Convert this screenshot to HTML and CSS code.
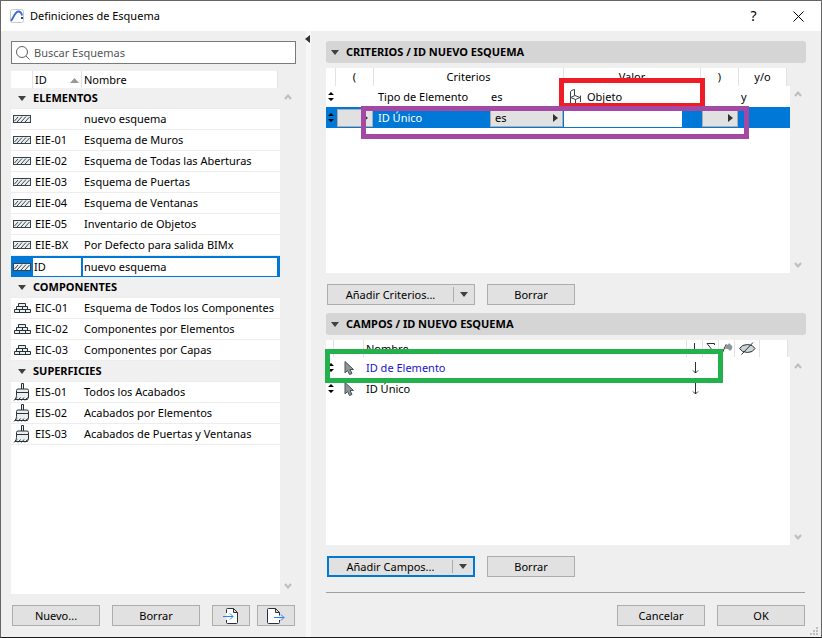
FILE: index.html
```html
<!DOCTYPE html>
<html lang="es">
<head>
    <meta charset="UTF-8">
    <title>Definiciones de Esquema</title>
    <link rel="stylesheet" href="styles.css">
</head>
<body>
<svg class="defs">
    <defs>
        <symbol id="i-hatch" viewBox="0 0 18 8">
            <rect x="0.5" y="0.5" width="17" height="7" fill="#eef0f0" stroke="#37434a"/>
            <path d="M1.500 6L5 2M4 7L9 1.500M8 7L13 1.500M12 7L16.500 2" stroke="#37434a" fill="none"/>
        </symbol>
        <symbol id="i-brick" viewBox="0 0 18 12">
            <path d="M5.500 1.500h7v3h-7zM3.500 4.500h11v3h-11zM9.500 4.500v3M1.500 7.500h16v3h-16zM6.500 7.500v3M12.500 7.500v3" fill="#eceff0" stroke="#263238"/>
        </symbol>
        <symbol id="i-brush" viewBox="0 0 18 18">
            <path d="M8.500 6V0.500h2V6" fill="#eceff0" stroke="#263238"/>
            <path d="M3.500 9.500v-2q0-1.500 1.500-1.500h9q1.500 0 1.500 1.500v2zM3.500 9.500h12v4.500l-1 2.500H2q1.500-2 1.500-4z" fill="#eceff0" stroke="#263238"/>
            <path d="M1 17.500l3-3M5 17.500l2.500-3M8.500 17.500l2.500-3M12 17.500l2.500-3" stroke="#263238"/>
        </symbol>
        <symbol id="i-chair" viewBox="0 0 12 15">
            <path d="M1.500 14V2.500Q2.500 1 5.500 0.500V6.500M1.500 8.500L6 6.500l5 2L6.500 10.500zM6.500 10.500V15M11.500 6.500V13" fill="none" stroke="#37434a"/>
        </symbol>
        <symbol id="i-move" viewBox="0 0 6 9">
            <path d="M0 3L3 0l3 3zM0 6l3 3 3-3z" fill="currentColor"/>
        </symbol>
        <symbol id="i-cursor" viewBox="0 0 10 14">
            <path d="M1 0.500V12l2.500-2.500 2 4 2.500-1-2-4H9.500z" fill="#8d9699" stroke="#4a5256"/>
        </symbol>
        <symbol id="i-down" viewBox="0 0 7 12">
            <path d="M3.500 0v11M1 8.500l2.500 2.500L6 8.500" fill="none" stroke="#263238"/>
        </symbol>
        <symbol id="i-up-chev" viewBox="0 0 8 6">
            <path d="M1 5l3-3.500L7 5" fill="none" stroke="#bdbdbd" stroke-width="2"/>
        </symbol>
        <symbol id="i-down-chev" viewBox="0 0 8 6">
            <path d="M1 1l3 3.500L7 1" fill="none" stroke="#bdbdbd" stroke-width="2"/>
        </symbol>
        <symbol id="i-tri" viewBox="0 0 8 5">
            <path d="M0 0h8L4 5z" fill="#404040"/>
        </symbol>
    </defs>
</svg>
<div class="dialog">
    <header class="titlebar">
        <svg class="app-icon" width="14" height="14" viewBox="0 0 14 14">
            <rect x="0.5" y="0.5" width="13" height="13" rx="2" fill="#fff" stroke="#c8c8c8"/>
            <path d="M1 12C4 8 5 2.500 8.500 2.500c2 0 3 1.500 3.500 4" fill="none" stroke="#3b6fd0" stroke-width="2"/>
            <rect x="11" y="8" width="2" height="2" fill="#1c3f8f"/>
        </svg>
        <h1>Definiciones de Esquema</h1>
        <button class="win-btn" aria-label="Ayuda">?</button>
        <button class="win-btn" aria-label="Cerrar">
            <svg width="11" height="11" viewBox="0 0 11 11"><path d="M0.500 0.500l10 10M10.500 0.500l-10 10" stroke="#000" fill="none"/></svg>
        </button>
    </header>
    <div class="content">
        <aside class="sidebar">
            <label class="search">
                <svg width="14" height="14" viewBox="0 0 14 14"><circle cx="6" cy="6" r="5.500" fill="none" stroke="#606060"/><path d="M10 10l3.500 3.500" stroke="#606060"/></svg>
                <input type="text" placeholder="Buscar Esquemas" aria-label="Buscar Esquemas">
            </label>
            <div class="list">
                <div class="list-body">
                    <table class="schemes">
                        <colgroup><col class="c-icon"><col class="c-id"><col><col class="c-end"></colgroup>
                        <thead>
                        <tr><th></th><th>ID <svg class="sort" width="9" height="5" viewBox="0 0 9 5"><path d="M0 5L4.500 0 9 5z" fill="#999"/></svg></th><th>Nombre</th><th class="blank"></th></tr>
                        </thead>
                        <tbody>
                        <tr class="group"><td><svg width="8" height="5"><use href="#i-tri"/></svg></td><td colspan="3">ELEMENTOS</td></tr>
                        <tr><td><svg width="18" height="8"><use href="#i-hatch"/></svg></td><td></td><td colspan="2">nuevo esquema</td></tr>
                        <tr><td><svg width="18" height="8"><use href="#i-hatch"/></svg></td><td>EIE-01</td><td colspan="2">Esquema de Muros</td></tr>
                        <tr><td><svg width="18" height="8"><use href="#i-hatch"/></svg></td><td>EIE-02</td><td colspan="2">Esquema de Todas las Aberturas</td></tr>
                        <tr><td><svg width="18" height="8"><use href="#i-hatch"/></svg></td><td>EIE-03</td><td colspan="2">Esquema de Puertas</td></tr>
                        <tr><td><svg width="18" height="8"><use href="#i-hatch"/></svg></td><td>EIE-04</td><td colspan="2">Esquema de Ventanas</td></tr>
                        <tr><td><svg width="18" height="8"><use href="#i-hatch"/></svg></td><td>EIE-05</td><td colspan="2">Inventario de Objetos</td></tr>
                        <tr><td><svg width="18" height="8"><use href="#i-hatch"/></svg></td><td>EIE-BX</td><td colspan="2">Por Defecto para salida BIMx</td></tr>
                        <tr class="selected"><td><svg width="18" height="8"><use href="#i-hatch"/></svg></td><td><input type="text" value="ID" aria-label="ID"></td><td colspan="2"><input type="text" value="nuevo esquema" aria-label="Nombre"></td></tr>
                        <tr class="group"><td><svg width="8" height="5"><use href="#i-tri"/></svg></td><td colspan="3">COMPONENTES</td></tr>
                        <tr><td><svg width="18" height="12"><use href="#i-brick"/></svg></td><td>EIC-01</td><td colspan="2">Esquema de Todos los Componentes</td></tr>
                        <tr><td><svg width="18" height="12"><use href="#i-brick"/></svg></td><td>EIC-02</td><td colspan="2">Componentes por Elementos</td></tr>
                        <tr><td><svg width="18" height="12"><use href="#i-brick"/></svg></td><td>EIC-03</td><td colspan="2">Componentes por Capas</td></tr>
                        <tr class="group"><td><svg width="8" height="5"><use href="#i-tri"/></svg></td><td colspan="3">SUPERFICIES</td></tr>
                        <tr><td><svg width="18" height="18"><use href="#i-brush"/></svg></td><td>EIS-01</td><td colspan="2">Todos los Acabados</td></tr>
                        <tr><td><svg width="18" height="18"><use href="#i-brush"/></svg></td><td>EIS-02</td><td colspan="2">Acabados por Elementos</td></tr>
                        <tr><td><svg width="18" height="18"><use href="#i-brush"/></svg></td><td>EIS-03</td><td colspan="2">Acabados de Puertas y Ventanas</td></tr>
                        </tbody>
                    </table>
                </div>
                <div class="scroll"><svg width="8" height="6"><use href="#i-up-chev"/></svg><svg width="8" height="6"><use href="#i-down-chev"/></svg></div>
            </div>
            <div class="buttons">
                <button class="btn">Nuevo...</button>
                <button class="btn">Borrar</button>
                <button class="btn icon-btn" aria-label="Importar">
                    <svg width="20" height="16" viewBox="0 0 20 16"><path d="M5.500 5V1.500q0-1 1-1h6l4 4v10q0 1-1 1h-9q-1 0-1-1V12M12.500 0.500v4h4" fill="#fff" stroke="#263238"/><path d="M2 8.500h10M9 5.500l3 3-3 3" fill="none" stroke="#2b80ff"/></svg>
                </button>
                <button class="btn icon-btn" aria-label="Exportar">
                    <svg width="20" height="16" viewBox="0 0 20 16"><path d="M13.500 12v2.500q0 1-1 1h-10q-1 0-1-1v-13q0-1 1-1h7l4 4v3M9.500 0.500v4h4" fill="#fff" stroke="#263238"/><path d="M8 9.500h10M15 6.500l3 3-3 3" fill="none" stroke="#2b80ff"/></svg>
                </button>
            </div>
        </aside>
        <div class="splitter"><svg width="5" height="8" viewBox="0 0 5 8"><path d="M5 0v8L0 4z" fill="#333"/></svg></div>
        <main class="main">
            <section class="panel">
                <h2><svg width="8" height="5"><use href="#i-tri"/></svg>CRITERIOS / ID NUEVO ESQUEMA</h2>
                <div class="list">
                    <div class="list-body">
                        <table class="criteria">
                            <colgroup><col class="c-move"><col class="c-paren"><col class="c-crit"><col class="c-op"><col><col class="c-paren"><col class="c-logic"><col class="c-gap"></colgroup>
                            <thead>
                            <tr><th></th><th>(</th><th colspan="2">Criterios</th><th>Valor</th><th>)</th><th>y/o</th><th class="blank"></th></tr>
                            </thead>
                            <tbody>
                            <tr><td><svg width="6" height="9"><use href="#i-move"/></svg></td><td></td><td>Tipo de Elemento</td><td class="op">es</td><td class="value"><svg width="12" height="15"><use href="#i-chair"/></svg>Objeto</td><td></td><td colspan="2">y</td></tr>
                            <tr class="selected">
                                <td><svg width="6" height="9"><use href="#i-move"/></svg></td>
                                <td><div class="popup"><select aria-label="Paréntesis izquierdo"><option></option></select></div></td>
                                <td>ID Único</td>
                                <td><div class="popup"><select aria-label="Operador"><option>es</option></select></div></td>
                                <td><input type="text" aria-label="Valor"></td>
                                <td><div class="popup"><select aria-label="Paréntesis derecho"><option></option></select></div></td>
                                <td colspan="2"></td>
                            </tr>
                            </tbody>
                        </table>
                        <div class="mark mark-red"></div>
                        <div class="mark mark-purple"></div>
                    </div>
                    <div class="scroll"><svg width="8" height="6"><use href="#i-up-chev"/></svg><svg width="8" height="6"><use href="#i-down-chev"/></svg></div>
                </div>
                <div class="buttons">
                    <div class="split"><button>Añadir Criterios...</button><button aria-label="Más criterios"><svg width="8" height="5"><use href="#i-tri"/></svg></button></div>
                    <button class="btn">Borrar</button>
                </div>
            </section>
            <section class="panel">
                <h2><svg width="8" height="5"><use href="#i-tri"/></svg>CAMPOS / ID NUEVO ESQUEMA</h2>
                <div class="list">
                    <div class="list-body">
                        <table class="fields">
                            <colgroup><col class="c-grip"><col class="c-cursor"><col><col class="c-flag"><col class="c-flag"><col class="c-flag"><col class="c-eye"><col class="c-rest"><col class="c-end"></colgroup>
                            <thead>
                            <tr>
                                <th></th><th></th><th>Nombre</th>
                                <th><svg width="7" height="12"><use href="#i-down"/></svg></th>
                                <th><svg width="9" height="11" viewBox="0 0 9 11"><path d="M8.500 2V0.500H1L5 5.500 1 10.500h7.500V9" fill="none" stroke="#263238"/></svg></th>
                                <th><svg width="12" height="12" viewBox="0 0 12 12"><path d="M0.500 12L5 1.500" stroke="#263238"/><path d="M5 1q2 2 3-1l3.500 3.500q0 3-2.500 4.500Q7 5 4 6z" fill="#8d9699"/></svg></th>
                                <th><svg width="17" height="13" viewBox="0 0 17 13"><path d="M0.500 6.500Q3 2.500 8.500 2.500t7.500 4q-2 4-7.500 4t-8-4z" fill="#cfd4d6" stroke="#263238"/><path d="M2.500 12.500L14 0.500" stroke="#263238"/></svg></th>
                                <th></th><th class="blank"></th>
                            </tr>
                            </thead>
                            <tbody>
                            <tr><td><svg width="6" height="9"><use href="#i-move"/></svg></td><td><svg width="10" height="14"><use href="#i-cursor"/></svg></td><td class="active">ID de Elemento</td><td><svg width="7" height="12"><use href="#i-down"/></svg></td><td colspan="5"></td></tr>
                            <tr><td><svg width="6" height="9"><use href="#i-move"/></svg></td><td><svg width="10" height="14"><use href="#i-cursor"/></svg></td><td>ID Único</td><td><svg width="7" height="12"><use href="#i-down"/></svg></td><td colspan="5"></td></tr>
                            </tbody>
                        </table>
                        <div class="mark mark-green"></div>
                    </div>
                    <div class="scroll"><svg width="8" height="6"><use href="#i-up-chev"/></svg><svg width="8" height="6"><use href="#i-down-chev"/></svg></div>
                </div>
                <div class="buttons">
                    <div class="split focused"><button>Añadir Campos...</button><button aria-label="Más campos"><svg width="8" height="5"><use href="#i-tri"/></svg></button></div>
                    <button class="btn">Borrar</button>
                </div>
            </section>
            <footer>
                <button class="btn">Cancelar</button>
                <button class="btn">OK</button>
            </footer>
        </main>
    </div>
    <svg class="grip" width="8" height="8" viewBox="0 0 8 8"><path d="M6 0h2v2H6zM3 3h2v2H3zM6 3h2v2H6zM0 6h2v2H0zM3 6h2v2H3zM6 6h2v2H6z" fill="#bfbfbf"/></svg>
</div>
</body>
</html>
```
FILE: styles.css
```css
* {
    box-sizing: border-box;
    margin: 0;
    padding: 0;
}

body {
    font: 11px/16px "Noto Sans", "Open Sans", sans-serif;
    color: #000;
}

button, input, select {
    font: inherit;
    color: inherit;
    border: 0;
    border-radius: 0;
}

svg {
    display: block;
    flex: none;
}

.defs {
    position: absolute;
    width: 0;
    height: 0;
}

.dialog {
    position: relative;
    display: flex;
    flex-direction: column;
    height: 100vh;
    border: 1px solid #666;
    border-bottom-color: #1a1a1a;
    background: #efefef;
}

/* title bar */
.titlebar {
    display: flex;
    align-items: center;
    height: 30px;
    padding-left: 9px;
    background: #fff;
}

.titlebar h1 {
    flex: 1;
    margin-left: 6px;
    font-size: 11px;
    font-weight: normal;
}

.win-btn {
    display: flex;
    align-items: center;
    justify-content: center;
    width: 45px;
    height: 30px;
    background: none;
    font-size: 14px;
}

.content {
    display: flex;
    flex: 1;
    min-height: 0;
}

/* left side */
.sidebar {
    display: flex;
    flex-direction: column;
    width: 305px;
    padding: 10px 10px 11px;
}

.search {
    display: flex;
    align-items: center;
    gap: 4px;
    height: 23px;
    margin-bottom: 7px;
    padding-left: 4px;
    border: 1px solid #7a7a7a;
    background: #fff;
}

.search input {
    flex: 1;
    outline: none;
}

.search input::placeholder {
    color: #555;
}

.splitter {
    width: 5px;
    padding-top: 4px;
    background: #f7f7f7;
}

.splitter svg {
    margin-left: -1px;
}

/* lists */
.list {
    display: flex;
    flex: 1;
    min-height: 0;
}

.list-body {
    position: relative;
    flex: 1;
    min-width: 0;
    background: #fff;
}

.scroll {
    display: flex;
    flex-direction: column;
    justify-content: space-between;
    align-items: center;
    width: 16px;
    padding: 23px 0 5px;
}

table {
    width: 100%;
    table-layout: fixed;
    border-spacing: 0;
}

th {
    height: 17px;
    border-right: 1px solid #e2e2e2;
    font-weight: normal;
}

th.blank {
    border: 0;
    background: #efefef;
}

td {
    height: 21px;
    white-space: nowrap;
}

th svg {
    margin: 0 auto;
}

.selected td {
    background: #0078d7;
}

.c-icon { width: 22px; }
.c-id { width: 49px; }
.c-end { width: 2px; }
.c-move { width: 10px; }
.c-paren { width: 38px; }
.c-crit { width: 115px; }
.c-op { width: 75px; }
.c-logic { width: 48px; }
.c-gap { width: 3px; }
.c-grip { width: 8px; }
.c-cursor { width: 30px; }
.c-flag { width: 16px; }
.c-eye { width: 25px; }
.c-rest { width: 28px; }

.schemes th {
    text-align: left;
    padding-left: 2px;
}

.schemes th .sort {
    float: right;
    margin: 6px 2px 0 0;
}

.schemes td {
    padding-left: 2px;
    border-bottom: 1px solid #ededed;
}

.schemes .group td {
    background: #f0f0f0;
    font-weight: bold;
    padding-left: 0;
}

.schemes .group svg {
    margin-left: 7px;
}

.schemes .selected td {
    border: 0 solid #0078d7;
    border-width: 1px 1px 1px 0;
}

.schemes .selected td:nth-child(n+2) {
    padding: 0;
}

.schemes .selected td:last-child {
    border-width: 1px 3px 1px 1px;
}

.selected input {
    display: block;
    width: 100%;
    height: 18px;
    padding-left: 1px;
    background: #fff;
    outline: none;
}

/* criteria and fields */
.main {
    display: flex;
    flex: 1;
    flex-direction: column;
    min-width: 0;
    padding: 10px 15px 11px;
}

.panel {
    display: flex;
    flex: 1;
    flex-direction: column;
    min-height: 0;
    margin-bottom: 8px;
}

.panel h2 {
    display: flex;
    align-items: center;
    gap: 7px;
    height: 22px;
    margin-bottom: 5px;
    padding-left: 5px;
    border-radius: 3px;
    background: #d5d5d5;
    font-size: 11px;
}

.criteria th {
    height: 18px;
}

.criteria td:first-child svg,
.fields td:first-child svg {
    margin-left: 2px;
}

.criteria td:nth-child(3) {
    padding-left: 4px;
}

.criteria td.op {
    padding-left: 2px;
}

.criteria td:last-child {
    padding-left: 2px;
}

.criteria .value svg {
    float: left;
    margin: 0 6px 0 5px;
}

.criteria .selected td:nth-child(3) {
    color: #fff;
}

.criteria .selected input {
    width: calc(100% - 19px);
}

.popup {
    position: relative;
    margin: 0 1px;
}

.popup select {
    display: block;
    width: 100%;
    height: 18px;
    padding-left: 4px;
    border: 1px solid #adadad;
    background: #e1e1e1;
    appearance: none;
}

.popup::after {
    content: "";
    position: absolute;
    top: 5px;
    right: 5px;
    border-left: 5px solid #333;
    border-top: 4px solid transparent;
    border-bottom: 4px solid transparent;
}

.fields th:nth-child(3) {
    text-align: left;
    padding-left: 2px;
}

.fields td:nth-child(2) {
    padding-left: 10px;
}

.fields td:nth-child(3) {
    padding-left: 2px;
}

.fields td:nth-child(4) svg {
    margin: 0 auto;
}

.fields .active {
    color: #1a12d0;
}

/* highlight frames over the rows */
.mark {
    position: absolute;
    border: 5px solid;
    pointer-events: none;
}

.mark-red {
    top: 10px;
    right: 85px;
    width: 146px;
    height: 30px;
    border-color: #ee1c25;
}

.mark-purple {
    top: 38px;
    left: 35px;
    right: 41px;
    height: 33px;
    border-color: #a349a4;
}

.mark-green {
    top: 9px;
    left: -1px;
    right: 67px;
    height: 34px;
    border-color: #22b14c;
}

/* buttons */
.buttons {
    display: flex;
    gap: 12px;
    margin-top: 11px;
    padding-left: 1px;
}

.btn {
    width: 88px;
    height: 21px;
    border: 1px solid #adadad;
    background: #e1e1e1;
}

.icon-btn {
    display: flex;
    align-items: center;
    justify-content: center;
    width: 38px;
}

.icon-btn + .icon-btn {
    margin-left: -5px;
}

.split {
    display: flex;
    width: 148px;
    height: 21px;
    border: 1px solid #adadad;
    background: #e1e1e1;
}

.split.focused {
    border: 2px solid #0078d7;
}

.split button {
    flex: 1;
    background: none;
}

.split button + button {
    display: flex;
    flex: none;
    align-items: center;
    justify-content: center;
    width: 21px;
    margin: 2px 0;
    border-left: 1px solid #adadad;
}

footer {
    display: flex;
    justify-content: flex-end;
    gap: 12px;
    margin-top: 7px;
    margin-right: 1px;
    padding-top: 12px;
    border-top: 1px solid #a0a0a0;
}

.grip {
    position: absolute;
    right: 3px;
    bottom: 2px;
}
```
